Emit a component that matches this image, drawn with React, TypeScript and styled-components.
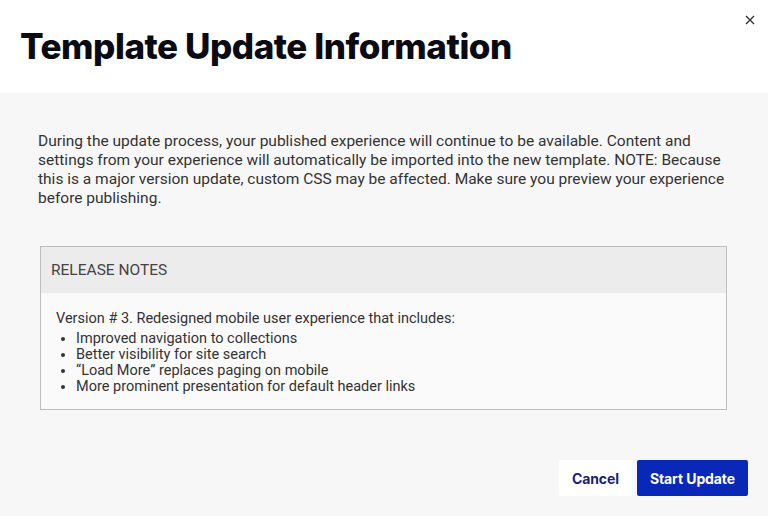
import styled, { createGlobalStyle } from "styled-components";
import React from "react";

const GlobalStyle = createGlobalStyle`
  html, body {
    margin: 0;
    padding: 0;
    background: #f7f7f7;
  }
  body {
    font-family: Roboto, "Liberation Sans", sans-serif;
    color: #333;
  }
`;

const Dialog = styled.section`
  width: 768px;
  height: 516px;
  display: flex;
  flex-direction: column;
  background: #f7f7f7;
`;

const Header = styled.header`
  position: relative;
  height: 93px;
  background: #ffffff;
  display: flex;
  align-items: center;
  padding: 0 20px;
  box-sizing: border-box;

  h1 {
    margin: 0;
    margin-top: -2px;
    font-family: Inter, Roboto, sans-serif;
    font-weight: 800;
    font-size: 35px;
    letter-spacing: -0.45px;
    color: #0a0a14;
  }
`;

const CloseButton = styled.button`
  position: absolute;
  top: 12px;
  right: 10px;
  width: 16px;
  height: 16px;
  padding: 0;
  border: none;
  background: none;
  display: flex;
  align-items: center;
  justify-content: center;
  cursor: pointer;
`;

const Body = styled.div`
  flex: 1;
  padding: 39px 38px 0 38px;
  font-size: 15.5px;
  line-height: 19px;
  color: #333;

  p {
    margin: 0;
  }
`;

const NotesBox = styled.div`
  margin: 38px 3px 0 2px;
  border: 1px solid #bdbdbd;
  background: #fafafa;

  .title {
    height: 46px;
    display: flex;
    align-items: center;
    padding: 0 10px;
    background: #ececec;
    font-size: 15.5px;
    color: #444;
  }

  .content {
    padding: 18px 15px 15px 15px;
    font-size: 14.5px;
    line-height: 16px;
    color: #333;
    height: 116px;
    box-sizing: border-box;
  }

  ul {
    margin: 4px 0 0 0;
    padding-left: 20px;
  }
`;

const Footer = styled.footer`
  display: flex;
  justify-content: flex-end;
  gap: 5px;
  padding: 0 20px 20px 0;
`;

const Button = styled.button<{ $primary?: boolean }>`
  height: 36px;
  padding: 0 13px;
  border: none;
  border-radius: 2px;
  font-family: Inter, Roboto, sans-serif;
  font-weight: 700;
  font-size: 14px;
  letter-spacing: -0.1px;
  cursor: pointer;
  background: ${(p) => (p.$primary ? "#0a28b8" : "#ffffff")};
  color: ${(p) => (p.$primary ? "#ffffff" : "#1a1f7a")};
`;

const notes = [
  "Improved navigation to collections",
  "Better visibility for site search",
  "\u201CLoad More\u201D replaces paging on mobile",
  "More prominent presentation for default header links",
];

const App: React.FC = () => {
  return (
    <>
      <GlobalStyle />
      <Dialog>
        <Header>
          <h1>Template Update Information</h1>
          <CloseButton aria-label="Close">
            <svg width="10" height="10" viewBox="0 0 10 10">
              <path d="M1 1L9 9M9 1L1 9" stroke="#333" strokeWidth="1.4" />
            </svg>
          </CloseButton>
        </Header>
        <Body>
          <p>
            During the update process, your published experience will continue to be available.
            Content and settings from your experience will automatically be imported into the new
            template. NOTE: Because this is a major version update, custom CSS may be affected. Make
            sure you preview your experience before publishing.
          </p>
          <NotesBox>
            <div className="title">RELEASE NOTES</div>
            <div className="content">
              Version # 3. Redesigned mobile user experience that includes:
              <ul>
                {notes.map((n) => (
                  <li key={n}>{n}</li>
                ))}
              </ul>
            </div>
          </NotesBox>
        </Body>
        <Footer>
          <Button>Cancel</Button>
          <Button $primary>Start Update</Button>
        </Footer>
      </Dialog>
    </>
  );
};

export default App;
